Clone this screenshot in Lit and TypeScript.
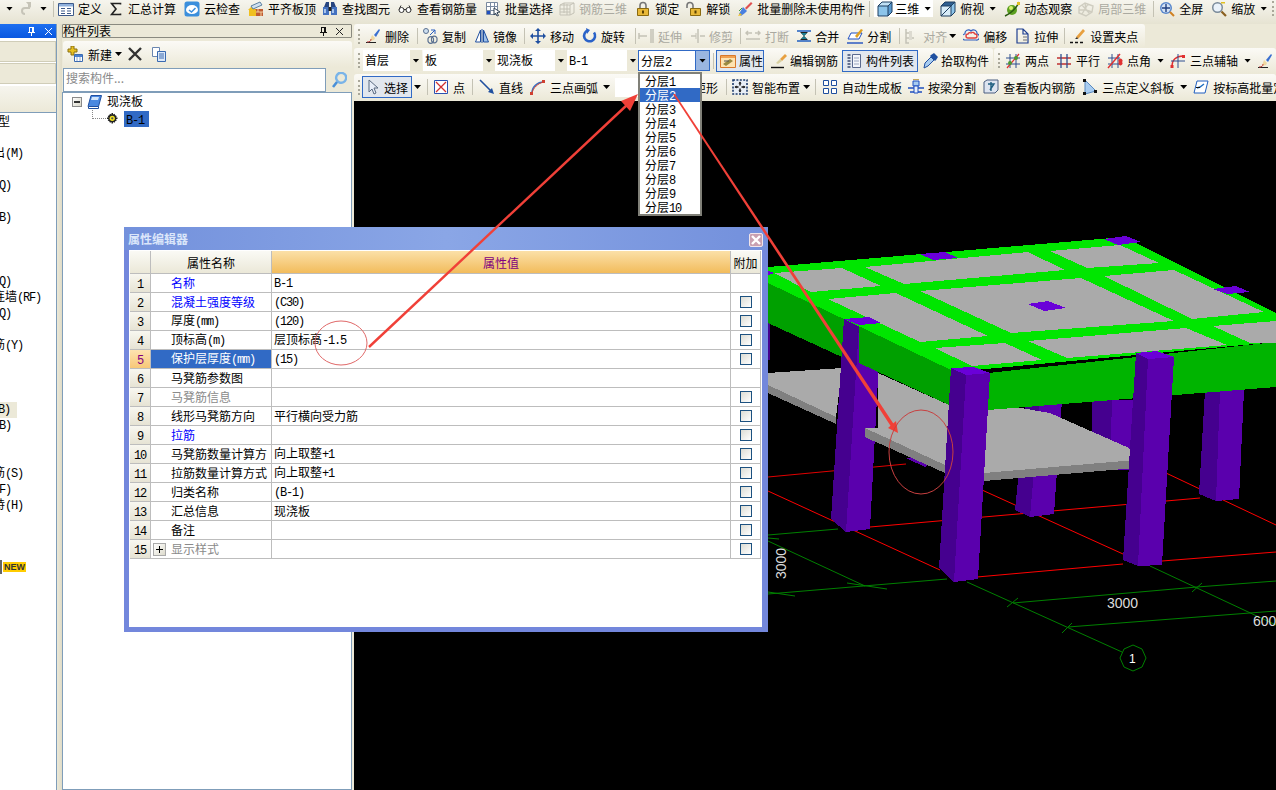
import { LitElement, html, css, svg, nothing } from "lit";
import { customElement } from "lit/decorators.js";

const F = (d: string, c: string) => svg`<path d=${d} fill=${c} />`;
const S = (d: string, c: string, w = 1) => svg`<path d=${d} fill="none" stroke=${c} stroke-width=${w} />`;
const B = (d: string, f: string, s: string) => svg`<path d=${d} fill=${f} stroke=${s} />`;

const brush = [
  F("M9 7l5-6 1 1-4 7z", "#3a6fd0"),
  F("M7 7l3 3-1 2-4 1z", "#f0d8a0"),
  S("M1 14.5h10", "#222"),
  S("M2 14c3 0 4-1 4-3", "#c04040"),
];

const icons: Record<string, unknown> = {
  def: [B("M.5 2.5h15v12H.5z", "#fff", "#3d5a8a"), F("M1 3h14v2.5H1z", "#8fb0dc"), S("M3 7.5h4M3 10h4M3 12.5h4M9 7.5h4M9 10h4M9 12.5h4", "#3d5a8a")],
  sum: S("M12.5 3.5v-1H3.6L8 8l-4.4 5.5h8.9v-1", "#222", 1.6),
  cloud: [F("M3 .5h10a2.5 2.5 0 012.5 2.5v10a2.5 2.5 0 01-2.5 2.5H3A2.5 2.5 0 01.5 13V3A2.5 2.5 0 013 .5z", "#3b8fdc"), F("M2 9a6 5 0 0112 0 6 4 0 01-12 0z", "#fff"), S("M5 9l2.5 2 4-4", "#3b8fdc", 1.5)],
  align: [F("M7 8h8v7H7z", "#c05a30"), S("M7 11h8M10 8v3M13 11v4", "#f0d0a0"), F("M0 9l4-4 4 4v6H1V9z", "#f0c020"), B("M3 5l9-4 2 3-9 4z", "#cfe0f0", "#5a7fa0")],
  find: [F("M2 6l2-5h3v5zM14 6l-2-5H9v5z", "#27457f"), F("M1 6h6v8H1zM9 6h6v8H9z", "#4472c0"), F("M6.5 6h3v4h-3z", "#222"), F("M2 8h2v4H2zM10 8h2v4h-2z", "#a8c4ec")],
  glasses: [B("M2 9a2.5 2.5 0 105 0 2.5 2.5 0 10-5 0zM9 9a2.5 2.5 0 105 0 2.5 2.5 0 10-5 0z", "#fff", "#333"), S("M7 8.5h2M2 8.5l2-4M14 8.5l-2-4", "#333")],
  batch: [B("M1.5 1.5h11v12h-11z", "#fff", "#7a8aa0"), S("M1.5 5.5h11M1.5 9.5h11M5.5 1.5v12M9.5 1.5v12", "#7a8aa0"), F("M2 10h3v3H2z", "#2050c0"), B("M9 7l6 4-3 .5 1.5 3-1.5.5-1.5-3L9 14z", "#fff", "#345")],
  grid3: [S("M1 4l4-2h10v10l-4 2H1zM1 4h10v10M11 4l4-2M5 2v10M8 3v11M1 8h10M1 11h10", "#c4c2b6")],
  lock: [S("M5 7V4.5a3 3 0 016 0V7", "#777", 1.6), B("M2.5 7.5h11v7h-11z", "#e8b838", "#8a6a10"), F("M7 9.5h2v3H7z", "#5a4000")],
  unlock: [S("M1 7V4.5a3 3 0 016 0V7", "#777", 1.6), B("M4.5 7.5h10v7h-10z", "#e8b838", "#8a6a10"), F("M8.5 9.5h2v3h-2z", "#5a4000")],
  wipe: [F("M8 7l6-6 1.5 1.5-6 6z", "#e05050"), F("M6 6l4 4-2 2-4 3-2-2z", "#4a80e0"), F("M1 15l2-3 2 2z", "#f0c020"), S("M2 10l3-3", "#3aa040")],
  cube: [F("M1 5l4-4h10L11 5z", "#bfe0f5"), F("M11 5l4-4v10l-4 4z", "#5a9ad0"), F("M1 5h10v10H1z", "#8cc4ea"), S("M1 5l4-4h10v10l-4 4H1zM1 5h10l4-4M11 5v10", "#1f3f60")],
  topview: [F("M1 5l4-4h10L11 5z", "#2f5f90"), F("M11 5l4-4v10l-4 4z", "#8cc4ea"), F("M1 5h10v10H1z", "#d8ecf8"), S("M1 5l4-4h10v10l-4 4H1zM1 5h10l4-4M11 5v10M1 15l10-10", "#1f3f60")],
  orbit: [F("M3 9a5 5 0 1010 0 5 5 0 10-10 0z", "#5ca020"), F("M5 7a2 2 0 104 0 2 2 0 10-4 0z", "#d8f070"), S("M1 15C6 13 13 7 15 1", "#2a5a10", 1.5), F("M13 1h3v3h-3z", "#e0c020")],
  local3d: [S("M1 6l6-4 8 3-1 6-6 4-7-3zM7 2l1 7-7 0M8 9l6 2M4 4l8 9M10 3l-6 10", "#cfcdc0", 1.4)],
  full: [F("M1 7a6 6 0 1012 0 6 6 0 10-12 0z", "#5a88cc"), F("M2.5 7a4.5 4.5 0 109 0 4.5 4.5 0 10-9 0z", "#d4e2f4"), S("M7 3v8M3 7h8", "#1f3f80", 1.4), S("M11 11l4 4", "#d08020", 2)],
  zoom: [F("M1 6.5a5.5 5.5 0 1011 0 5.5 5.5 0 10-11 0z", "#7a8a9a"), F("M2.5 6.5a4 4 0 108 0 4 4 0 10-8 0z", "#eaf2fa"), S("M10.5 10.5l4.5 4.5", "#8a6020", 2.2), F("M10 1h4v1.5h-4z", "#e0c020")],
  erase: [...brush],
  dup: [B("M1.5 3a2.5 2.5 0 105 0 2.5 2.5 0 10-5 0z", "#cfe0f0", "#5a7090"), S("M9.5 11.5a2.8 2.8 0 105.5 0 2.8 2.8 0 10-5.5 0zM6 12a2.8 2.8 0 105.5 0 2.8 2.8 0 10-5.5 0z", "#5a7090", 1.2), S("M9 2h4v4M13 2L8 7", "#2a5fc0")],
  mirror: [B("M6.5 2v12h-5z", "#fff", "#1f4f9f"), B("M9.5 2v12h5z", "#9cc0ea", "#1f4f9f"), S("M8 1v14", "#1f4f9f")],
  move: [S("M8 2v12M2 8h12", "#1f4fa0", 1.6), F("M8 0l3 3H5zM8 16l3-3H5zM0 8l3-3v6zM16 8l-3-3v6z", "#1f4fa0")],
  rotate: [S("M12 4.5a5.5 5.5 0 11-6-2", "#2a62c8", 2.6), F("M4 0l4 2-3 4z", "#2a62c8")],
  extend: [S("M1 8h8M1 5v6M13 1v14M15 1v14", "#c4c2b6", 1.5)],
  trim: [S("M1 8h5M10 8h5M8 1v14", "#c4c2b6", 1.5), S("M6 5v6", "#c4c2b6")],
  cut: [S("M1 5h6M10 5h5M1 11h14M3 3l-2 2 2 2M13 3l2 2-2 2", "#c4c2b6", 1.5)],
  merge: [S("M1 3h14M1 13h14", "#1f5fc0", 1.6), F("M8 8L4 4h8zM8 8l-4 4h8z", "#222"), F("M8 8L5 5h6zM8 8l-3 3h6z", "#1f7f90")],
  split: [B("M1 11l3-6h11l-3 6z", "#fff", "#1f4fc0"), F("M8 8l6-7 2 1-6 8z", "#e0a020"), S("M0 15h16", "#1f4fc0", 1.4)],
  lineup: [S("M3 1v14h3M3 5h5M3 10h8", "#c4c2b6", 1.5), F("M6 3h3v9H6z", "#dcdad0")],
  offset: [S("M2 12a3 3 0 010-6 3.5 3.5 0 016-3 3.5 3.5 0 016 3 3 3 0 01-1 6z", "#3060c0", 1.2), S("M5 10a2 2 0 010-4 2 2 0 013-1 2.5 2.5 0 014 1 2 2 0 010 4z", "#e04040", 1.4)],
  stretch: [S("M2 1h6l5 5v9H2zM8 1v5h5", "#1f3f90", 1.2), S("M8 9h4M8 12h4", "#999", 1.4)],
  grippt: [F("M6 9l7-8 2 2-7 8z", "#e8a040"), S("M0 14.5h3M5 14.5h3M10 14.5h3", "#111", 1.6), F("M5 11l2-2 1 2z", "#333")],
  attr: [B("M.5 2.5h15v12H.5z", "#fde3b0", "#d8782a"), F("M1 3h14v2H1z", "#f0a050"), F("M3 11l7-5 3 2-7 5z", "#9a8a40"), S("M4 8h5", "#555")],
  rebar: [F("M9 6l5-5 2 2-5 5z", "#e8a040"), F("M5 10l4-4 2 2-4 3z", "#d8d0a0"), S("M0 14.5h13", "#111", 1.4)],
  list: [S("M1.5 2h3M1.5 5h3M1.5 8h3M1.5 11h3M1.5 14h3", "#3a4a70", 1.6), B("M6.5 1.5h8v13h-8z", "#f4f6fa", "#5a6a90"), S("M8 5h5M8 8h5M8 11h5", "#9aa6c0")],
  pick: [F("M3 10l6-6 3 3-6 6-4 2z", "#a8ccf0"), S("M3 10l6-6 3 3-6 6-4 2z", "#2050a0"), F("M9 2l3-2 4 4-2 3-1 1-5-5z", "#2050a0")],
  twopt: [S("M1 5h14M1 11h14M5 1v14M11 1v14", "#2f4f8f"), S("M2 15L14 1", "#e03030", 1.2), F("M3 10a2 2 0 104 0 2 2 0 10-4 0zM9 5a2 2 0 104 0 2 2 0 10-4 0z", "#4a9a30")],
  para: [S("M1 5h14M1 11h14", "#c03030", 1.3), S("M5 1v14M11 1v14", "#2f4f8f", 1.3)],
  angle: [S("M1 5h12M1 11h12M5 1v14M11 1v14", "#2f4f8f"), S("M1 15L13 1", "#e03030", 1.4), F("M12 9a2 2 0 103 0 2 2 0 10-3 0z", "#e03030")],
  arcaxis: [S("M2 13C2 7 6 3 13 3", "#e03030", 1.3), S("M1 8h14M8 1v14", "#2f4f8f"), F("M.5 12h3v3h-3zM12 2h3v3h-3z", "#e03030")],
  cursor: [B("M3 1v12l3-3 2 5 2-1-2-5h4z", "#e8eef8", "#5a6a80")],
  point: [B("M1.5 1.5h13v13h-13z", "#fff", "#2a50b0"), S("M3 3l10 10M13 3L3 13", "#d03030", 1.3)],
  line: [S("M1 1l12 12", "#1f4f9f", 1.6), F("M15 15l-6-2 4-4z", "#1f4f9f")],
  arc: [S("M2 14C2 8 7 3 14 3", "#3a6fc0", 1.5), S("M2 14C3 9 8 4 14 3", "#d04030"), F("M0 13h3v3H0zM12 1h3v3h-3z", "#d04030")],
  smart: [F("M.5.5h15v15H.5z", "#e8eef6"), svg`<path d="M1 1h14v14H1z" fill="none" stroke="#1c3a6a" stroke-width="1.6" stroke-dasharray="2 1.4" />`, S("M8 3.5v3M8 9.5v3M3.5 8h3M9.5 8h3", "#111", 1.4), F("M8 2.5l1.6 2H6.4zM8 13.5l1.6-2H6.4zM2.5 8l2-1.6v3.2zM13.5 8l-2-1.6v3.2z", "#111")],
  four: [B("M1.5 1.5h5v5h-5zM9.5 1.5h5v5h-5zM1.5 9.5h5v5h-5zM9.5 9.5h5v5h-5z", "#fff", "#1f4f9f")],
  beamcut: [B("M5 2h6v5H5z", "#a8ccf0", "#1f4fc0"), S("M0 9h16M2 13h12", "#1f4fc0", 1.4), B("M6 7h4v7H6z", "#e8f0fa", "#1f4fc0"), S("M5 0h6", "#b08a20", 1.4)],
  viewbar: [B("M1 3l3-2h11v10l-3 3H1z", "#dde4f0", "#4a5f80"), S("M5 5h6l-4 6M8 3v9", "#1f5f80", 1.4)],
  tri: [B("M3 1l11 11-11 3z", "#a8ccf0", "#5a8ac0"), F("M1 0h3v3H1zM1 13h3v3H1zM12 11h3v3h-3z", "#111")],
  slope: [B("M4 2h11l-3 12H1z", "#fff", "#1f5fc0"), S("M4 9l3-1 4-3", "#2070c0", 1.4), S("M3 8.5h4", "#111")],
  brush2: [...brush],
  add: [F("M4 0h3v3h3v3H7v3H4V6H1V3h3z", "#e8c020"), S("M4 0h3v3h3v3H7v3H4V6H1V3h3z", "#8a7010"), B("M7.5 8.5h8v7h-8z", "#fff", "#3a6ab0"), F("M8 9h7v2H8z", "#4a80d0"), S("M10 11v4M13 11v4", "#8aa6d0")],
  del: S("M2 2l12 12M14 2L2 14", "#333", 2.4),
  paste: [B("M1.5 1.5h7v9h-7z", "#fff", "#6a86b0"), B("M6.5 5.5h8v10h-8z", "#dce8f8", "#3a6ab0"), S("M8 8h5M8 10h5M8 12h5", "#3a6ab0")],
  search: [S("M6 3a5 5 0 109 4 5 5 0 00-9-4z", "#7ab4e8", 2.4), S("M6 10l-4 5", "#4a90d8", 2.6)],
  slab: [B("M4 1.5h10.5l-3 11H1z", "#4a88e0", "#1f4fa0"), F("M5 3h7l-1 3H4z", "#d0e4fa"), B("M1.5 12.5h10v2h-10z", "#fff", "#1f4fa0")],
  gear: [F("M6 0h2v2l2-1 1 2 2 1-1 2h2v2h-2l1 2-2 1-1 2-2-1v2H6v-2l-2 1-1-2-2-1 1-2H0V6h2L1 4l2-1 1-2 2 1z", "#222"), F("M3.5 7a3.5 3.5 0 107 0 3.5 3.5 0 10-7 0z", "#f0e020"), F("M5.5 7a1.5 1.5 0 103 0 1.5 1.5 0 10-3 0z", "#555")],
  redo: [S("M11 3v4H7a3 3 0 00-3 3c0 2 1 3 3 3", "#c6c4b8", 2), F("M8 1l5 0v6z", "#c6c4b8")],
};

const icon = (n: string) => html`<svg class="i" width="16" height="16" viewBox="0 0 16 16">${icons[n]}</svg>`;

// latin runs are squeezed, the source font has half width latin
const txt = (s: string) =>
  s.split(/([\x20-\x7e]+)/).map((p, k) => (k % 2 ? html`<span class="l">${p}</span>` : p));

const shared = css`
  * { box-sizing: border-box; }
  .l {
    font-family: "Liberation Mono", monospace;
    font-size: 12px;
    letter-spacing: -1.2px;
  }
`;

type Tool = {
  k?: "sep" | "grip" | "caret" | "sel" | "blank";
  i?: string;
  t?: string;
  g?: number;
  tg?: number;
  pr?: number;
  off?: boolean;
  on?: boolean;
  w?: number;
};

const row1: Tool[] = [
  { k: "caret", g: 6 }, { i: "redo", g: 5 }, { k: "caret", g: 6 }, { k: "sep", g: 6 },
  { i: "def", t: "定义", g: 4 }, { i: "sum", t: "汇总计算", g: 6 }, { i: "cloud", t: "云检查" }, { i: "align", t: "平齐板顶" },
  { i: "find", t: "查找图元", g: 6 }, { i: "glasses", t: "查看钢筋量", g: 7 }, { i: "batch", t: "批量选择" },
  { i: "grid3", t: "钢筋三维", g: 6, off: true }, { i: "lock", t: "锁定" }, { i: "unlock", t: "解锁", g: 7 },
  { i: "wipe", t: "批量删除未使用构件", g: 7 }, { k: "sep", g: 4 },
];
const row1b: Tool[] = [
  { i: "topview", t: "俯视", g: 7 }, { k: "caret", g: 5 }, { i: "orbit", t: "动态观察", g: 8 }, { i: "local3d", t: "局部三维", g: 6, off: true },
  { k: "sep", g: 7 }, { i: "full", t: "全屏", g: 5 }, { i: "zoom", t: "缩放" }, { k: "caret", g: 5 }, { k: "grip", g: 5 },
];
const row2: Tool[] = [
  { k: "grip", g: 4 }, { i: "erase", t: "删除", g: 5 }, { k: "sep" }, { i: "dup", t: "复制", g: 4 }, { i: "mirror", t: "镜像", tg: 3 },
  { k: "sep", g: 7 }, { i: "move", t: "移动", g: 5 }, { i: "rotate", t: "旋转", tg: 3 }, { k: "sep", g: 10 },
  { i: "extend", t: "延伸", g: 2, off: true }, { i: "trim", t: "修剪", off: true, tg: 3 }, { k: "sep", g: 7 },
  { i: "cut", t: "打断", g: 4, off: true }, { i: "merge", t: "合并", g: 7, tg: 3 }, { i: "split", t: "分割", g: 8 }, { k: "sep" },
  { i: "lineup", t: "对齐", g: 3, off: true }, { k: "caret", g: 2 }, { i: "offset", t: "偏移", g: 7 }, { i: "stretch", t: "拉伸", tg: 3 },
  { k: "sep", g: 6 }, { i: "grippt", t: "设置夹点", g: 5 },
];
const row3: Tool[] = [
  { k: "grip", g: 4 }, { k: "sel", t: "首层", g: 3, w: 59 }, { k: "sel", t: "板", g: 1 }, { k: "sel", t: "现浇板" }, { k: "sel", t: "B-1" },
  { k: "sel", t: "分层2", on: true, g: -1 }, { k: "sep", g: 3 },
  { i: "attr", t: "属性", on: true, g: 2, tg: 3 }, { i: "rebar", t: "编辑钢筋", g: 7, tg: 3 }, { i: "list", t: "构件列表", on: true, g: 4, pr: 3 }, { i: "pick", t: "拾取构件", g: 4, tg: 3 },
];
const row3b: Tool[] = [
  { k: "grip", g: 4 }, { i: "twopt", t: "两点", g: 5 }, { i: "para", t: "平行", g: 7 }, { i: "angle", t: "点角", g: 7 }, { k: "caret", g: 6 },
  { i: "arcaxis", t: "三点辅轴", g: 6 }, { k: "caret", g: 6 }, { i: "brush2", g: 6 },
];
const row4: Tool[] = [
  { k: "grip", g: 4 }, { i: "cursor", t: "选择", on: true, g: 2, tg: 2, pr: 3 }, { k: "caret", g: 2 }, { k: "sep", g: 6 },
  { i: "point", t: "点", g: 5 }, { k: "sep", g: 7 }, { i: "line", t: "直线", g: 6 }, { i: "arc", t: "三点画弧", g: 7 }, { k: "caret", g: 5 },
  { k: "blank", w: 23, g: 5 }, { t: "矩形", g: 56 }, { k: "sep", g: 8 }, { i: "smart", t: "智能布置", g: 5 }, { k: "caret", g: 3 }, { k: "sep", g: 5 },
  { i: "four", t: "自动生成板", g: 6 }, { i: "beamcut", t: "按梁分割", g: 6 }, { i: "viewbar", t: "查看板内钢筋", g: 7 },
  { i: "tri", t: "三点定义斜板", g: 7 }, { k: "caret", g: 6 }, { i: "slope", t: "按标高批量定义", g: 6 },
];

const sideRows: Record<number, [string, number]> = {
  0: ["型", 10], 2: ["出(M)", 23], 4: ["Q)", 11], 6: ["B)", 11], 10: ["Q)", 11], 11: ["连墙(RF)", 41],
  12: ["Q)", 11], 14: ["筋(Y)", 23], 18: ["B)", 17], 19: ["B)", 11], 22: ["筋(S)", 23], 23: ["F)", 11], 24: ["持(H)", 23],
};

const poly = (pts: string, fill: string) => svg`<polygon points=${pts} fill=${fill} />`;
const seg = (pts: string, c: string) => svg`<polyline points=${pts} fill="none" stroke=${c} />`;

const PURPLE_L = "#45008f";
const PURPLE_R = "#5a00ad";
const CAP = "#6a00d8";
const SLAB = "#aaaaaa";
const SLAB_D = "#808080";

@customElement("scene-view")
export class SceneView extends LitElement {
  static styles = css`
    :host { display: block; position: absolute; inset: 0; overflow: hidden; }
    svg { display: block; }
    text { font-family: "Liberation Sans", sans-serif; fill: #dcdcdc; font-size: 14px; }
  `;

  column(a: number[], b: number[], c: number[], d: number[], e: number[], f: number[]) {
    // top-left, front, top-right, then the three feet
    return svg`
      ${poly(`${a} ${b} ${e} ${d}`, PURPLE_L)}
      ${poly(`${b} ${c} ${f} ${e}`, PURPLE_R)}
    `;
  }

  render() {
    return html`<svg width="922" height="689" viewBox="354 101 922 689" shape-rendering="crispEdges">
      <g shape-rendering="auto">
        ${seg("768,477 906,464", "#e00000")}
        ${seg("768,491 940,570", "#ff0000")}
        ${seg("870,527 1200,498", "#ff0000")}
        ${seg("977,577 1123,564", "#ff0000")}
        ${seg("1162,561 1276,552", "#ff0000")}
        ${seg("982,490 1123,554", "#ff0000")}
        ${seg("1166,473 1276,525", "#ff0000")}
        ${seg("768,535 838,529", "#008000")}
        ${seg("768,538 779,539", "#008000")}
        ${seg("768,541 865,586", "#008000")}
        ${seg("847,583 887,589", "#008000")}
        ${seg("768,594 947,579", "#008000")}
        ${seg("768,592 795,596", "#008000")}
        ${seg("967,582 1122,652", "#008000")}
        ${seg("1013,603 1197,587 1276,581", "#008000")}
        ${seg("1068,627 1276,611", "#008000")}
        ${seg("1150,566 1276,625", "#008000")}
        ${seg("1007,607 1018,598", "#008000")}
        ${seg("1062,633 1072,623", "#008000")}
        ${seg("1192,592 1202,583", "#008000")}
        <polygon points="1133,645 1142,649 1146,658 1142,667 1133,671 1124,667 1120,658 1124,649" fill="none" stroke="#008000" />
        <text x="1107" y="608">3000</text>
        <text x="1253" y="626">600</text>
        <text transform="translate(786 579) rotate(-90)">3000</text>
        <text x="1129" y="663" style="font-size:12px;fill:#fff">1</text>
      </g>

      ${poly("768,320 770,320 770,360 768,360", PURPLE_L)}
      ${this.column([1026, 400], [1040, 400], [1062, 400], [1015, 510], [1030, 517], [1054, 514])}
      ${poly("1092,400 1112,400 1110,470 1092,470", PURPLE_L)}
      ${poly("1112,400 1134,400 1133,470 1110,470", PURPLE_R)}
      ${this.column([1205, 390], [1220, 390], [1244, 390], [1199, 494], [1216, 501], [1239, 499])}
      ${poly("906,458 925,467 928,465 930,455", PURPLE_R)}

      ${poly("768,373 842,368 836,417 768,385", SLAB)}
      ${poly("768,385 836,417 836,424 768,393", SLAB_D)}
      ${poly("865,428 878,428 878,373 949,405 988,408 1021,408 1050,413 1129,448 1135,460 984,473 945,465", SLAB)}
      ${poly("865,428 945,465 945,473 865,437", SLAB_D)}
      ${poly("945,465 984,473 1135,460 1135,468 984,481 945,473", SLAB_D)}

      ${poly("768,283 844,319 844,358 768,323", "#00a000")}
      ${this.column([844, 319], [859, 325], [881, 323], [831, 519], [846, 532], [870, 529])}
      ${poly("865,428 880,428 880,435", SLAB)}
      ${poly("865,428 880,435 880,444 865,437", SLAB_D)}
      ${poly("859,325 951,368 949,405 859,363", "#00a000")}
      ${poly("988,373 1276,342 1276,387 988,410", "#00b400")}
      ${poly("768,267 1124,237 1276,313 1276,342 975,370 951,370 768,283", "#00e600")}
      ${poly("774,273 842,268 881,286 811,292", SLAB)}
      ${poly("865,267 1028,252 1065,270 904,284", SLAB)}
      ${poly("1050,251 1120,245 1159,263 1087,268", SLAB)}
      ${poly("828,299 896,293 988,336 920,342", SLAB)}
      ${poly("920,291 1081,278 1174,321 1011,333", SLAB)}
      ${poly("1104,276 1174,270 1264,312 1192,319", SLAB)}
      ${poly("935,348 1005,343 1042,360 972,366", SLAB)}
      ${poly("1028,341 1186,328 1227,345 1067,358", SLAB)}
      ${poly("1213,326 1276,321 1276,343 1250,343", SLAB)}
      ${poly("920,254 945,252 958,258 933,260", CAP)}
      ${poly("1104,239 1126,236 1141,242 1118,245", CAP)}
      ${poly("1213,289 1236,286 1250,292 1227,294", CAP)}
      ${poly("1028,304 1048,301 1066,308 1044,311", CAP)}
      ${poly("768,271 774,273 768,275", CAP)}
      ${this.column([951, 368], [966, 375], [990, 373], [939, 568], [954, 582], [978, 579])}
      ${this.column([1136, 353], [1148, 359], [1174, 357], [1123, 560], [1138, 566], [1162, 565])}
      ${poly("844,319 869,317 881,323 859,325", CAP)}
      ${poly("951,368 974,367 990,373 966,375", CAP)}
      ${poly("1136,353 1157,351 1174,357 1148,359", CAP)}
    </svg>`;
  }
}

const propRows: { n: string; v?: string; c?: string; box?: boolean; sel?: boolean; plus?: boolean }[] = [
  { n: "名称", v: "B-1", c: "blue" },
  { n: "混凝土强度等级", v: "(C30)", c: "blue", box: true },
  { n: "厚度(mm)", v: "(120)", box: true },
  { n: "顶标高(m)", v: "层顶标高-1.5", box: true },
  { n: "保护层厚度(mm)", v: "(15)", box: true, sel: true },
  { n: "马凳筋参数图" },
  { n: "马凳筋信息", c: "dim", box: true },
  { n: "线形马凳筋方向", v: "平行横向受力筋", box: true },
  { n: "拉筋", c: "blue", box: true },
  { n: "马凳筋数量计算方", v: "向上取整+1", box: true },
  { n: "拉筋数量计算方式", v: "向上取整+1", box: true },
  { n: "归类名称", v: "(B-1)", box: true },
  { n: "汇总信息", v: "现浇板", box: true },
  { n: "备注", box: true },
  { n: "显示样式", c: "dim", box: true, plus: true },
];

@customElement("prop-dialog")
export class PropDialog extends LitElement {
  static styles = [
    shared,
    css`
      :host {
        display: block;
        position: absolute;
        left: 124px;
        top: 227px;
        width: 644px;
        height: 405px;
        padding: 0 6px 5px 5px;
        background: #7387dc;
        font: 12px "Noto Sans CJK SC", sans-serif;
        color: #000;
      }
      .title {
        height: 23px;
        margin: 0 -6px 0 -5px;
        padding: 3px 6px 0 4px;
        display: flex;
        justify-content: space-between;
        background: linear-gradient(90deg, #7391dc, #8aa6e6 50%, #7390dc);
        color: #dbe6fa;
        font-weight: 700;
      }
      .close {
        width: 14px;
        height: 14px;
        margin: 3px -1px 0 0;
        background: #c8a0b0;
        border: 1px solid #f0e4ea;
        border-radius: 2px;
      }
      .close svg { display: block; }
      .body { height: 377px; background: #fff; padding: 1px 0 0 1px; }
      .table { display: grid; grid-template-columns: 21px 121px 459px 30px; grid-auto-rows: 19px; }
      .table > div {
        border-right: 1px solid #bdbdbd;
        border-bottom: 1px solid #bdbdbd;
        display: flex;
        align-items: center;
        white-space: nowrap;
        overflow: hidden;
      }
      .head { height: 23px; justify-content: center; background: linear-gradient(#fafaf5, #ebe8d8); }
      .table > .val-head { justify-content: center; background: linear-gradient(#fbe0a8, #f2bc5c); color: #800080; }
      .table > .num { justify-content: center; background: linear-gradient(#f8f7f0, #e6e3d4); }
      .table > .num.sel { background: linear-gradient(#fde2b0, #f8c878); color: #800080; }
      .table > .name { padding: 0 0 2px 20px; }
      .table > .name.sel { background: #316ac5; color: #fff; }
      .table > .val { padding: 0 0 2px 2px; }
      .table > .more { justify-content: center; }
      .blue { color: #0000ff; }
      .dim { color: #8a8a8a; }
      .box {
        width: 12px;
        height: 12px;
        border: 1px solid #1c5180;
        background: linear-gradient(135deg, #dcdcd4, #fff);
      }
      .plus {
        width: 13px;
        height: 13px;
        margin: 2px 5px 0 -18px;
        border: 1px solid #aaa;
        background: linear-gradient(135deg, #fff, #dcdacb);
        display: flex;
      }
    `,
  ];

  render() {
    return html`
      <div class="title">
        <span>属性编辑器</span>
        <span class="close"><svg width="12" height="12" viewBox="0 0 12 12"><path d="M2 2l8 8M10 2l-8 8" stroke="#fff" stroke-width="2.4" /></svg></span>
      </div>
      <div class="body">
        <div class="table" style="grid-template-rows:23px">
          <div class="head"></div>
          <div class="head">属性名称</div>
          <div class="head val-head">属性值</div>
          <div class="head">附加</div>
          ${propRows.map(
            (r, k) => html`
              <div class="num ${r.sel ? "sel" : ""}"><span>${txt(String(k + 1))}</span></div>
              <div class="name ${r.sel ? "sel" : r.c ?? ""}">
                ${r.plus
                  ? html`<span class="plus"><svg width="11" height="11" viewBox="0 0 11 11"><path d="M5.5 2v7M2 5.5h7" stroke="#000" /></svg></span>`
                  : nothing}
                <span>${txt(r.n)}</span>
              </div>
              <div class="val">${r.v ? html`<span>${txt(r.v)}</span>` : nothing}</div>
              <div class="more">${r.box ? html`<span class="box"></span>` : nothing}</div>
            `
          )}
        </div>
      </div>
    `;
  }
}

@customElement("app-root")
export class AppRoot extends LitElement {
  static styles = [
    shared,
    css`
      :host {
        display: block;
        position: relative;
        width: 1276px;
        height: 790px;
        overflow: hidden;
        background: #ece9d8;
        font: 12px "Noto Sans CJK SC", sans-serif;
        color: #000;
      }
      .bar {
        display: flex;
        align-items: center;
        height: 24px;
        padding-bottom: 7px;
        white-space: nowrap;
        background: linear-gradient(#f6f5ee, #e6e3d2);
      }
      .i { flex: none; display: block; }
      .tool { display: flex; align-items: center; flex: none; }
      .tool.off { color: #aaa9a0; }
      .tool.on {
        height: 22px;
        padding-left: 3px;
        border: 1px solid #316ac5;
        background: #e2e7ee;
      }
      .sep { flex: none; width: 1px; height: 16px; background: #c4c2b4; }
      .grip { flex: none; width: 2px; height: 15px; border-left: 2px dotted #aaa89a; }
      .caret {
        flex: none;
        width: 7px;
        height: 4px;
        background: #000;
        clip-path: polygon(0 0, 100% 0, 50% 100%);
      }
      .three {
        display: flex;
        align-items: center;
        flex: none;
        height: 17px;
        width: 59px;
        margin-left: 4px;
        padding-left: 3px;
        background: #fff;
      }
      .three span.t { margin: 0 5px 0 2px; }
      .main { display: flex; height: 766px; }

      .side { width: 57px; flex: none; border-right: 1px solid #7f9db9; background: #fff; display: flex; flex-direction: column; }
      .side-head {
        height: 14px;
        margin-bottom: 3px;
        background: linear-gradient(#1d6ff0, #0a58e0);
        display: flex;
        align-items: center;
        justify-content: flex-end;
        gap: 8px;
        padding-right: 3px;
      }
      .side-btn { height: 21px; margin-bottom: 1px; background: #ece9d8; border: 1px solid #d0cdb8; border-left: 0; }
      .side-gap { height: 27px; background: linear-gradient(#f6f5ee, #ece9d8); border-bottom: 1px solid #7f9db9; margin-top: 1px; }
      .side-rows { padding-top: 1px; }
      .side-row { height: 16px; display: flex; align-items: center; justify-content: flex-end; white-space: nowrap; }
      .side-row span { margin-bottom: 4px; }
      .side-row.hot { background: #ece9d8; justify-content: flex-start; }
      .side-row.hot span { margin-left: -1px; }
      .new { height: 16px; margin-top: -3px; display: flex; align-items: center; }
      .new i { width: 2px; height: 14px; background: #666; margin-right: 1px; }
      .new b {
        font: 700 9px "Liberation Sans", sans-serif;
        background: #ffcc00;
        color: #333;
        padding: 0 1px;
        line-height: 10px;
      }
      .rail { width: 5px; flex: none; background: linear-gradient(90deg, #ece9d8, #e0dcc8); }

      .list { width: 290px; flex: none; display: flex; flex-direction: column; }
      .list-title {
        height: 14px;
        background: #ece9d8;
        border: 1px solid #8a8a80;
        border-radius: 1px;
        display: flex;
        align-items: center;
        line-height: 12px;
        margin-bottom: 3px;
      }
      .list-title .grow { flex: 1; }
      .list-title .pin { margin-right: 7px; }
      .list-bar {
        height: 26px;
        margin-left: 1px;
        background: linear-gradient(#fbfaf6, #ece9d8);
        border-radius: 3px;
        display: flex;
        align-items: center;
        padding-left: 4px;
      }
      .list-bar .caret { margin: 0 5px 0 3px; }
      .search { display: flex; align-items: center; height: 25px; margin-left: 1px; }
      .search .field {
        width: 263px;
        height: 24px;
        background: #fff;
        border: 1px solid #7f9db9;
        color: #8a8a8a;
        padding-left: 2px;
        line-height: 17px;
      }
      .search .i { margin-left: 5px; }
      .tree { flex: 1; background: #fff; border: 1px solid #7f9db9; padding: 0 0 0 9px; }
      .node { display: flex; align-items: center; height: 17px; }
      .minus {
        width: 10px;
        height: 10px;
        border: 1px solid #8a8a8a;
        background: linear-gradient(135deg, #fff, #d8d6c8);
        margin-right: 5px;
        position: relative;
      }
      .minus::after { content: ""; position: absolute; left: 1px; right: 1px; top: 3px; height: 2px; background: #333; }
      .node .name { margin: 0 0 2px 4px; }
      .dots { width: 14px; height: 9px; margin: -9px 0 0 20px; border-left: 1px dotted #888; border-bottom: 1px dotted #888; }
      .gear { margin: 0 3px 0 -1px; transform: scale(0.75); }
      .picked { background: #316ac5; width: 25px; height: 16px; line-height: 15px; padding-left: 2px; }

      .work { flex: 1; display: flex; flex-direction: column; margin-left: 2px; min-width: 0; }
      .rows { height: 77px; display: flex; flex-direction: column; }
      .row { display: flex; align-items: center; overflow: hidden; flex: none; }
      .row.a { height: 24px; width: 791px; }
      .row.b { height: 25px; gap: 1px; margin-bottom: 1px; }
      .row.c { height: 26px; }
      .strip {
        display: flex;
        align-items: center;
        height: 100%;
        border-radius: 3px;
        background: linear-gradient(#fbfaf6, #ece9d8);
        flex: none;
        white-space: nowrap;
      }
      .row.a .strip, .row.c .strip { width: 100%; }
      .sel {
        display: flex;
        flex: none;
        width: 72px;
        height: 21px;
      }
      .sel .v { flex: 1; background: #fff; padding-left: 2px; line-height: 19px; }
      .sel .arr { width: 12px; background: #ece9d8; display: flex; align-items: center; justify-content: center; }
      .sel.on { border: 1px solid #316ac5; }
      .sel.on .arr { background: #9ab6e0; width: 14px; border-left: 1px solid #316ac5; }
      .blank { flex: none; height: 19px; background: #fff; }
      .canvas { flex: 1; background: #000; position: relative; }

      .menu {
        position: absolute;
        left: 638px;
        top: 72px;
        width: 64px;
        height: 144px;
        background: #fff;
        border: 2px solid #808078;
        font-size: 12px;
      }
      .menu div { height: 14px; line-height: 14px; padding-left: 5px; white-space: nowrap; }
      .menu .hit { background: #316ac5; color: #fff; }
      .marks { position: absolute; inset: 0; pointer-events: none; }
    `,
  ];

  tool(e: Tool) {
    const ml = `margin-left:${e.g ?? 8}px`;
    if (e.k === "sep") return html`<span class="sep" style=${ml}></span>`;
    if (e.k === "grip") return html`<span class="grip" style=${ml}></span>`;
    if (e.k === "caret") return html`<span class="caret" style=${ml}></span>`;
    if (e.k === "blank") return html`<span class="blank" style="${ml};width:${e.w}px"></span>`;
    if (e.k === "sel")
      return html`<div class="sel ${e.on ? "on" : ""}" style="margin-left:${e.g ?? 0}px;width:${e.w ?? 72}px">
        <span class="v">${txt(e.t!)}</span><span class="arr"><span class="caret"></span></span>
      </div>`;
    return html`<div class="tool ${e.off ? "off" : ""} ${e.on ? "on" : ""}" style="${ml};padding-right:${e.pr ?? 0}px">
      ${e.i ? icon(e.i) : nothing}
      ${e.t ? html`<span style="margin-left:${e.i ? e.tg ?? 4 : 0}px">${e.t}</span>` : nothing}
    </div>`;
  }

  side() {
    const rows = [];
    for (let k = 0; k < 28; k++) {
      const r = sideRows[k];
      rows.push(
        r
          ? html`<div class="side-row ${k === 18 ? "hot" : ""}" style="width:${r[1]}px"><span>${txt(r[0])}</span></div>`
          : html`<div class="side-row"></div>`
      );
    }
    return rows;
  }

  render() {
    return html`
      <div class="bar">
        ${row1.map((e) => this.tool(e))}
        <div class="three">${icon("cube")}<span class="t">三维</span><span class="caret"></span></div>
        ${row1b.map((e) => this.tool(e))}
      </div>
      <div class="main">
        <div class="side">
          <div class="side-head">
            <svg width="9" height="11" viewBox="0 0 9 11"><path d="M2 1v5H1v1h3v3h1V7h3V6H7V1zM3 2h2v4H3z" fill="#fff" /></svg>
            <svg width="9" height="9" viewBox="0 0 9 9"><path d="M1 1l7 7M8 1L1 8" stroke="#fff" /></svg>
          </div>
          <div class="side-btn"></div>
          <div class="side-btn"></div>
          <div class="side-gap"></div>
          <div class="side-rows">
            ${this.side()}
            <div class="new"><i></i><b>NEW</b></div>
          </div>
        </div>
        <div class="rail"></div>
        <div class="list">
          <div class="list-title">
            <span>构件列表</span>
            <span class="grow"></span>
            <svg class="pin" width="9" height="11" viewBox="0 0 9 11"><path d="M2 1v5H1v1h3v3h1V7h3V6H7V1zM3 2h2v4H3z" fill="#111" /></svg>
            <svg class="pin" width="9" height="9" viewBox="0 0 9 9"><path d="M1 1l7 7M8 1L1 8" stroke="#222" /></svg>
          </div>
          <div class="list-bar">
            ${icon("add")}<span style="margin-left:5px">新建</span><span class="caret"></span>${icon("del")}
            <span style="width:8px"></span>${icon("paste")}
          </div>
          <div class="search">
            <div class="field">搜索构件...</div>
            ${icon("search")}
          </div>
          <div class="tree">
            <div class="node"><span class="minus"></span>${icon("slab")}<span class="name">现浇板</span></div>
            <div class="node">
              <span class="dots"></span>
              <span class="gear">${icon("gear")}</span>
              <span class="picked">${txt("B-1")}</span>
            </div>
          </div>
        </div>
        <div class="work">
          <div class="rows">
            <div class="row a"><div class="strip">${row2.map((e) => this.tool(e))}</div></div>
            <div class="row b">
              <div class="strip" style="width:639px">${row3.map((e) => this.tool(e))}</div>
              <div class="strip" style="width:282px">${row3b.map((e) => this.tool(e))}</div>
            </div>
            <div class="row c"><div class="strip">${row4.map((e) => this.tool(e))}</div></div>
          </div>
          <div class="canvas"><scene-view></scene-view></div>
        </div>
      </div>

      <prop-dialog></prop-dialog>

      <div class="menu">
        ${[1, 2, 3, 4, 5, 6, 7, 8, 9, 10].map(
          (n) => html`<div class=${n === 2 ? "hit" : ""}>${txt(`分层${n}`)}</div>`
        )}
      </div>

      <svg class="marks" width="1276" height="790" viewBox="0 0 1276 790">
        <line x1="369" y1="347" x2="628" y2="104" stroke="#f04038" stroke-width="2.4" />
        <polygon points="638,94 621,101 630,111" fill="#f04038" />
        <polygon points="673,94 675,94 895,426 892,428" fill="#f04038" />
        <polygon points="898,433 888,428 896,421" fill="#f04038" />
        <ellipse cx="341" cy="343" rx="26" ry="22" fill="none" stroke="#e06868" />
        <ellipse cx="921" cy="452" rx="32" ry="42" fill="none" stroke="#c84040" />
      </svg>
    `;
  }
}
